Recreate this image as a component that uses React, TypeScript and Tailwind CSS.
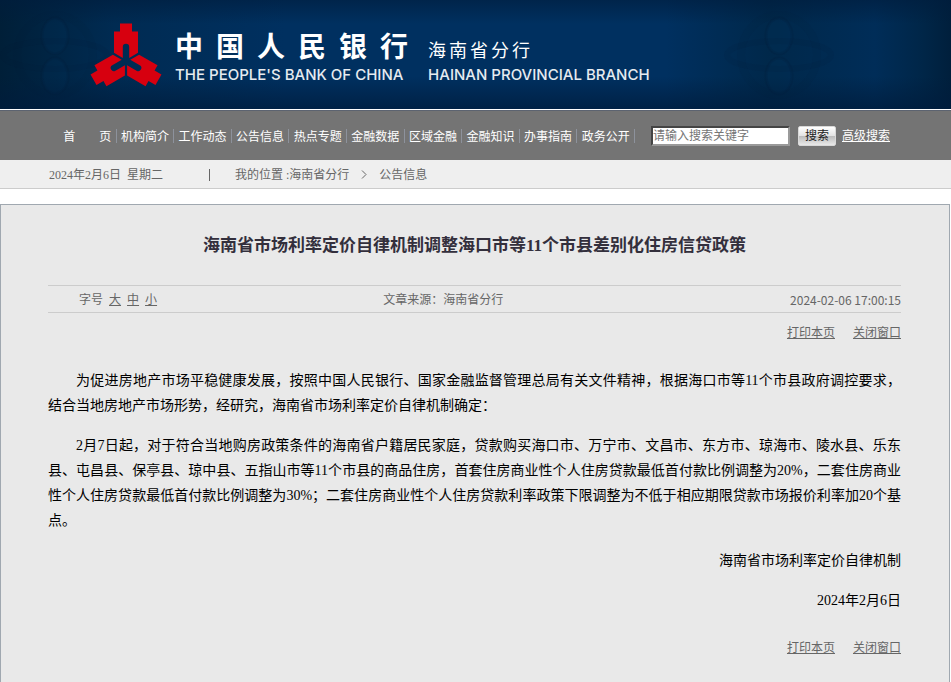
import { useState } from "react"

const navItems = [
    '首\u3000\u3000页', '机构简介', '工作动态', '公告信息', '热点专题',
    '金融数据', '区域金融', '金融知识', '办事指南', '政务公开',
]

const Emblem = () => {
    const arm = "M-6 -37.5H6V-29.5H12V-8.2L3.2 -3.1V-14A3.2 3.2 0 0 0 -3.2 -14V-3.1L-12 -8.2V-29.5H-6Z"
    return (
        <svg className="w-[72px] h-[66px] shrink-0" viewBox="-36 -39 72 66" fill="#d7000f" aria-hidden="true">
            <path d={arm} />
            <path d={arm} transform="rotate(120)" />
            <path d={arm} transform="rotate(240)" />
        </svg>
    )
}

// faint guilloche flower behind the banner
const Rosette = ({ className }: { className: string }) => {
    return (
        <svg className={className} viewBox="-80 -55 160 110" fill="none" aria-hidden="true">
            <ellipse rx="13" ry="18" cy="-19" fill="#003a6e" fillOpacity="0.15" stroke="#001d36" strokeOpacity="0.18" strokeWidth="3" />
            <ellipse rx="13" ry="18" cy="21" fill="#003a6e" fillOpacity="0.15" stroke="#001d36" strokeOpacity="0.18" strokeWidth="3" />
            <ellipse rx="52" ry="14" stroke="#001d36" strokeOpacity="0.08" strokeWidth="6" />
            <ellipse rx="38" ry="40" stroke="#001d36" strokeOpacity="0.07" strokeWidth="8" />
        </svg>
    )
}

const Header = () => {
    return (
        <header className="relative overflow-hidden h-[110px] border-b border-white bg-[linear-gradient(to_right,#001f38_0%,#002b52_12%,#003060_30%,#003060_70%,#00284a_81%,#002d58_92%,#002648_97%,#001f3c_100%)]">
            <Rosette className="absolute left-[-25px] top-0 w-[160px] h-[110px]" />
            <Rosette className="absolute right-[92px] top-0 w-[160px] h-[110px]" />
            <div className="relative flex items-start h-full pl-[90px] pt-[22px] text-white bg-[linear-gradient(to_bottom,#001c3c99_0%,#001c3c00_22%,#001c3c00_70%,#001c3cbb_100%)]">
                <Emblem />
                <div className="ml-[13px] mt-[9px]">
                    <div className="flex gap-[13px] text-[28px] leading-[34px] font-bold">
                        {'中国人民银行'.split('').map((char) => <span key={char}>{char}</span>)}
                    </div>
                    <p className="font-['Inter'] font-medium text-[15px] leading-[20px] text-[#e6ebf0]">THE PEOPLE'S BANK OF CHINA</p>
                </div>
                <div className="ml-5 mt-[9px]">
                    <div className="flex gap-[3px] text-[18px] leading-[34px] pt-[3px] h-[34px]">
                        {'海南省分行'.split('').map((char) => <span key={char}>{char}</span>)}
                    </div>
                    <p className="font-['Inter'] font-medium text-[15px] leading-[20px] text-[#e6ebf0]">HAINAN PROVINCIAL BRANCH</p>
                </div>
            </div>
        </header>
    )
}

const NavBar = () => {
    const [keyword, setKeyword] = useState('')

    return (
        <div className="flex items-center h-[50px] pl-[59px] bg-[#747474] border-t border-[#5c6370] text-white">
            <nav className="grid grid-cols-10 w-[576px]">
                {navItems.map((item) => (
                    <a key={item} href="#" className="h-[14px] leading-[16px] text-center whitespace-nowrap border-r border-[#8d929c]">{item}</a>
                ))}
            </nav>
            <form className="flex items-center ml-4" onSubmit={(e) => e.preventDefault()}>
                <input
                    type="text"
                    aria-label="请输入搜索关键字"
                    placeholder="请输入搜索关键字"
                    value={keyword}
                    onChange={(e) => setKeyword(e.target.value)}
                    className="w-[139px] h-[20px] pt-[2px] bg-white text-black placeholder:text-[#757575] border-2 border-t-[#444444] border-l-[#444444] border-r-[#9a9a9a] border-b-[#9a9a9a]"
                />
                <button type="submit" className="w-[38px] h-[20px] ml-2 rounded-[2px] text-[#222222] border border-[#d8d8d8] bg-[linear-gradient(to_bottom,#ffffff_0%,#e4e4e4_48%,#bdbdbd_52%,#e8e8e8_100%)] leading-[18px]">搜索</button>
                <a href="#" className="ml-[6px] leading-[18px] underline">高级搜索</a>
            </form>
        </div>
    )
}

const Breadcrumb = () => {
    return (
        <div className="flex items-center h-[29px] pl-[49px] pt-px bg-[#efefef] border-b border-[#cccccc] text-[#666666] whitespace-pre">
            <span className="w-[160px]">2024年2月6日  星期二</span>
            <span className="w-px h-[12px] bg-[#666666]" />
            <span className="ml-[25px]">我的位置 :</span>
            <a href="#">海南省分行</a>
            <svg className="w-[6px] h-[9px] mx-[12px]" viewBox="0 0 6 9" fill="none" stroke="#666666" aria-hidden="true">
                <path d="M1 0.5L5 4.5L1 8.5" />
            </svg>
            <a href="#">公告信息</a>
        </div>
    )
}

const PageActions = () => {
    return (
        <div className="flex justify-end gap-[18px] leading-[20px] text-[#666666]">
            <button type="button" className="underline" onClick={() => window.print()}>打印本页</button>
            <button type="button" className="underline" onClick={() => window.close()}>关闭窗口</button>
        </div>
    )
}

const Article = () => {
    return (
        <main className="mt-[15px] mr-px pl-[47px] pr-12 pt-[26px] pb-6 grow border border-b-0 border-[#a0a8b0] bg-[#e9e9e9]">
            <h1 className="text-center text-[17px] leading-[30px] font-bold text-[#332f3c]">海南省市场利率定价自律机制调整海口市等11个市县差别化住房信贷政策</h1>
            <div className="grid grid-cols-3 items-center h-[28px] mt-6 pt-px border-y border-[#cccccc] text-[#666666]">
                <div className="flex gap-[6px] pl-[31px]">
                    <span>字号</span>
                    <button type="button" className="underline">大</button>
                    <button type="button" className="underline">中</button>
                    <button type="button" className="underline">小</button>
                </div>
                <span className="pl-[51px]">文章来源：海南省分行</span>
                <time className="text-right font-['Noto_Sans_CJK_SC',sans-serif]">2024-02-06 17:00:15</time>
            </div>
            <div className="mt-[10px]">
                <PageActions />
            </div>
            <div className="mt-[25px] space-y-[15px] text-[14px] leading-[25px] text-black text-justify">
                <p className="indent-[28px]">为促进房地产市场平稳健康发展，按照中国人民银行、国家金融监督管理总局有关文件精神，根据海口市等11个市县政府调控要求，结合当地房地产市场形势，经研究，海南省市场利率定价自律机制确定：</p>
                <p className="indent-[28px]">2月7日起，对于符合当地购房政策条件的海南省户籍居民家庭，贷款购买海口市、万宁市、文昌市、东方市、琼海市、陵水县、乐东县、屯昌县、保亭县、琼中县、五指山市等11个市县的商品住房，首套住房商业性个人住房贷款最低首付款比例调整为20%，二套住房商业性个人住房贷款最低首付款比例调整为30%；二套住房商业性个人住房贷款利率政策下限调整为不低于相应期限贷款市场报价利率加20个基点。</p>
                <p className="text-right">海南省市场利率定价自律机制</p>
                <p className="text-right">2024年2月6日</p>
            </div>
            <div className="mt-[25px]">
                <PageActions />
            </div>
        </main>
    )
}

const App = () => {
    return (
        <div lang="zh-CN" className="min-h-screen flex flex-col bg-white font-['Liberation_Serif','Noto_Sans_CJK_SC',sans-serif] text-[12px] leading-[16px]">
            <Header />
            <NavBar />
            <Breadcrumb />
            <Article />
        </div>
    )
}

export default App
